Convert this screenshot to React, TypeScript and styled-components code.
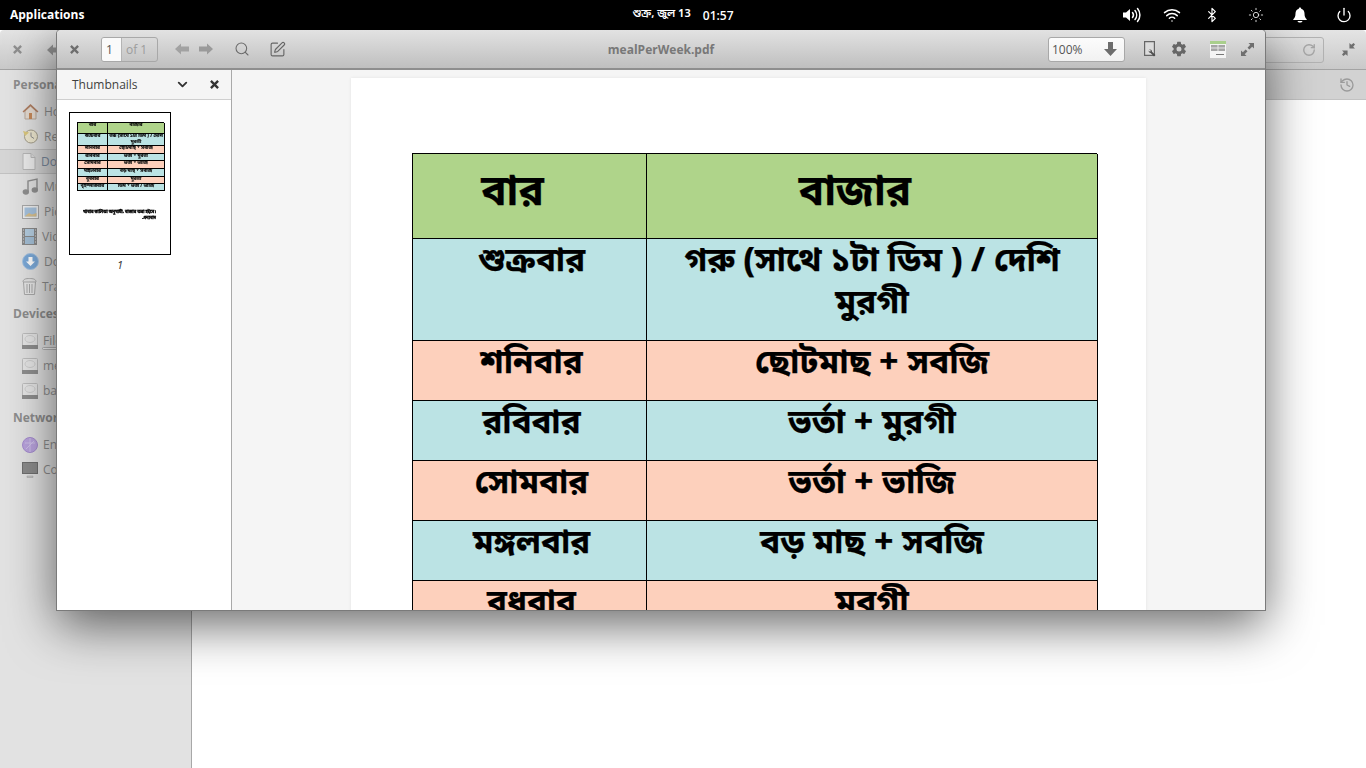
import * as React from "react";
import styled, { createGlobalStyle } from "styled-components";
import { Search, SquarePen, ChevronDown, RotateCw, History, Bluetooth, Sun, Power, Wifi } from "lucide-react";
import { IoSettingsSharp } from "react-icons/io5";

const GlobalStyle = createGlobalStyle`
  html, body {
    margin: 0;
    padding: 0;
    width: 1366px;
    height: 768px;
    overflow: hidden;
    background: #fff;
    font-family: "Open Sans", "Noto Sans", sans-serif;
  }
`;

const BANGLA = `"Noto Sans Bengali", "Lohit Bengali", "Noto Sans", "DejaVu Sans", sans-serif`;

const SScreen = styled.div`
  width: 1366px;
  height: 768px;
  display: flex;
  flex-direction: column;
  overflow: hidden;
`;

const SPanel = styled.div`
  position: relative;
  z-index: 1;
  height: 30px;
  flex: none;
  background: #000;
  color: #fff;
  display: grid;
  grid-template-columns: 1fr auto 1fr;
  align-items: center;
  padding: 0 10px;
  font-size: 12px;
  font-weight: 700;
`;

const SAppsLabel = styled.div`
  padding-bottom: 2px;
`;

const SClock = styled.div`
  display: flex;
  gap: 12px;
  font-weight: 600;
`;

const SDate = styled.span`
  font-family: ${BANGLA};
  font-size: 11px;
`;

const STray = styled.div`
  justify-self: end;
  display: flex;
  align-items: center;
  gap: 20px;
`;

const STrayIcon = styled.div<{ $tight?: boolean }>`
  width: 24px;
  height: 20px;
  display: flex;
  align-items: center;
  justify-content: center;
  margin-right: ${(p) => (p.$tight ? -4 : 0)}px;
`;

const SDesktop = styled.div`
  position: relative;
  flex: 1;
  min-height: 0;
`;

const SBackWindow = styled.div`
  height: 100%;
  display: flex;
  flex-direction: column;
  background: #fff;
`;

const SBackBar = styled.div`
  height: 39px;
  flex: none;
  background: linear-gradient(#e4e4e4, #c9c9c9);
  border-bottom: 1px solid #a3a3a3;
  border-radius: 4px 4px 0 0;
  display: flex;
  align-items: center;
  justify-content: space-between;
  padding: 0 11px 0 13px;
  color: #8f8f8f;
`;

const SBackLeft = styled.div`
  display: flex;
  align-items: center;
  gap: 25px;
`;

const SBackRight = styled.div`
  display: flex;
  align-items: center;
  gap: 18px;
`;

const SBackSearch = styled.div`
  width: 150px;
  height: 24px;
  border: 1px solid #b2b2b2;
  border-radius: 3px;
  display: flex;
  align-items: center;
  justify-content: flex-end;
  padding-right: 7px;
  color: #a5a5a5;
`;

const SBackBody = styled.div`
  flex: 1;
  display: flex;
  min-height: 0;
`;

const SSidebar = styled.div`
  width: 191px;
  flex: none;
  background: #e2e2e2;
  border-right: 1px solid #a8a8a8;
`;

const SSideHead = styled.div`
  height: 29px;
  line-height: 29px;
  padding-left: 13px;
  font-size: 12px;
  font-weight: 700;
  color: #8d8d8d;
`;

const SSideItem = styled.div<{ $active?: boolean }>`
  height: 25px;
  box-sizing: border-box;
  display: flex;
  align-items: center;
  gap: 5px;
  padding-left: 22px;
  font-size: 12px;
  color: ${(p) => (p.$active ? "#7b8a9e" : "#8f8f8f")};
  background: ${(p) => (p.$active ? "#d6d6d6" : "transparent")};
  border-top: ${(p) => (p.$active ? "1px solid #c2c2c2" : "none")};
  border-bottom: ${(p) => (p.$active ? "1px solid #c2c2c2" : "none")};
`;

const SSideLabel = styled.span<{ $usage?: boolean }>`
  position: relative;
  ${(p) =>
    p.$usage
      ? `&::after {
    content: "";
    position: absolute;
    left: -1px;
    top: 15px;
    width: 90px;
    height: 1px;
    background: #f2f2f2;
    border: 1px solid #b5b5b5;
    border-radius: 2px;
  }`
      : ""}
`;

const SBackMain = styled.div`
  flex: 1;
  display: flex;
  flex-direction: column;
`;

const SPathBar = styled.div`
  height: 30px;
  background: #d2d2d2;
  border-bottom: 1px solid #c2c2c2;
  box-sizing: border-box;
  display: flex;
  align-items: center;
  justify-content: flex-end;
  padding-right: 11px;
  color: #9a9a9a;
`;

const SPdfWindow = styled.div`
  position: absolute;
  left: 57px;
  top: 0;
  width: 1208px;
  height: 580px;
  display: flex;
  flex-direction: column;
  border-radius: 4px 4px 0 0;
  overflow: hidden;
`;

const SShadow = styled.div`
  position: absolute;
  left: 57px;
  top: 0;
  width: 1208px;
  height: 580px;
  border-radius: 4px 4px 0 0;
  box-shadow: 0 0 0 1px #7a7a7a, 0 15px 50px rgba(0, 0, 0, 0.6);
`;

const SToolbar = styled.div`
  height: 38px;
  flex: none;
  background: linear-gradient(#e2e2e2, #bfbfbf);
  border-bottom: 2px solid #8e8e8e;
  display: flex;
  align-items: center;
  position: relative;
  padding: 0 11px 0 13px;
  color: #6b6b6b;
`;

const STitle = styled.div`
  position: absolute;
  left: 0;
  right: 0;
  text-align: center;
  font-size: 12px;
  font-weight: 700;
  color: #787878;
  pointer-events: none;
`;

const SPager = styled.div`
  margin-left: 22px;
  width: 55px;
  height: 23px;
  border: 1px solid #a8a8a8;
  border-radius: 3px;
  display: flex;
  font-size: 12px;
  overflow: hidden;
`;

const SPageNum = styled.div`
  width: 20px;
  background: #fafafa;
  border-right: 1px solid #b4b4b4;
  color: #555;
  line-height: 23px;
  padding-left: 4px;
  box-sizing: border-box;
`;

const SPageOf = styled.div`
  flex: 1;
  color: #9c9c9c;
  line-height: 23px;
  padding-left: 4px;
`;

const SToolGroup = styled.div<{ $ml?: number; $gap?: number }>`
  display: flex;
  align-items: center;
  margin-left: ${(p) => p.$ml ?? 0}px;
  gap: ${(p) => p.$gap ?? 0}px;
`;

const SSpacer = styled.div`
  flex: 1;
`;

const SZoom = styled.div`
  width: 77px;
  height: 25px;
  box-sizing: border-box;
  background: linear-gradient(#fcfcfc, #f1f1f1);
  border: 1px solid #a8a8a8;
  border-radius: 3px;
  display: flex;
  align-items: center;
  justify-content: space-between;
  padding: 0 7px 0 3px;
  font-size: 12px;
  color: #555;
`;

const SPdfBody = styled.div`
  flex: 1;
  display: flex;
  min-height: 0;
`;

const SThumbPane = styled.div`
  width: 174px;
  flex: none;
  background: #fff;
  border-right: 1px solid #a9a9a9;
  display: flex;
  flex-direction: column;
`;

const SThumbHead = styled.div`
  height: 29px;
  flex: none;
  background: #f5f5f5;
  border-bottom: 1px solid #cfcfcf;
  display: flex;
  align-items: center;
  padding: 0 12px 0 15px;
  font-size: 12px;
  color: #3f3f3f;
`;

const SThumbTitle = styled.div`
  flex: 1;
`;

const SThumbHeadIcons = styled.div`
  display: flex;
  align-items: center;
  gap: 20px;
`;

const SThumbPage = styled.div`
  width: 102px;
  height: 143px;
  margin: 12px 0 0 12px;
  border: 1px solid #000;
  background: #fff;
  padding: 9px 6px 0 7px;
  box-sizing: border-box;
  filter: blur(0.35px);
`;

const SThumbLabel = styled.div`
  width: 102px;
  margin: 2px 0 0 12px;
  text-align: center;
  font-size: 11px;
  font-style: italic;
  color: #333;
`;

const SMiniTable = styled.div`
  display: grid;
  grid-template-columns: 30px 57px;
  border: 1px solid #000;
  border-width: 1px 0 0 1px;
  width: 87px;
  box-sizing: border-box;
  font-family: ${BANGLA};
  font-weight: 700;
  font-size: 4.8px;
  color: #111;
  -webkit-text-stroke: 0.15px #111;
`;

const SMiniCell = styled.div<{ $bg: string; $h: number }>`
  height: ${(p) => p.$h}px;
  background: ${(p) => p.$bg};
  border: 1px solid #000;
  border-width: 0 1px 1px 0;
  box-sizing: border-box;
  text-align: center;
  line-height: 5.5px;
  overflow: hidden;
`;

const SMiniNote = styled.div`
  margin-top: 18px;
  font-family: ${BANGLA};
  font-size: 4.2px;
  line-height: 6px;
  font-weight: 700;
  color: #000;
  text-align: right;
  padding-right: 8px;
  -webkit-text-stroke: 0.3px #000;
`;

const SViewer = styled.div`
  flex: 1;
  background: #f5f5f5;
  overflow: hidden;
  padding: 8px 0 0 119px;
`;

const SPage = styled.div`
  width: 795px;
  height: 900px;
  background: #fff;
  box-shadow: 0 0 3px rgba(0, 0, 0, 0.08);
  padding: 75px 0 0 61px;
  box-sizing: border-box;
`;

const STable = styled.div`
  width: 685px;
  display: grid;
  grid-template-columns: 234px 451px;
  border: 1px solid #000;
  border-width: 1px 0 0 1px;
  box-sizing: border-box;
  font-family: ${BANGLA};
  font-weight: 700;
  color: #000;
  -webkit-text-stroke: 0.25px #000;
`;

const SCell = styled.div<{ $bg: string; $h: number }>`
  height: ${(p) => p.$h}px;
  background: ${(p) => p.$bg};
  border: 1px solid #000;
  border-width: 0 1px 1px 0;
  box-sizing: border-box;
  text-align: center;
`;

const SHeadCell = styled(SCell)`
  font-size: 42px;
  line-height: 76px;
  padding: 2px 42px 0 8px;
`;

const SDayCell = styled(SCell)`
  font-size: 33px;
  line-height: 42px;
  padding: 3px 6px 0 10px;
`;

const SFoodCell = styled(SCell)`
  font-size: 33.6px;
  line-height: 42px;
  padding: 3px 8px 0;
`;

const GREEN = "#afd48a";
const BLUE = "#bbe3e4";
const PEACH = "#fdd0bc";

const rows: { day: string; food: string; bg: string; h: number }[] = [
  { day: "শুক্রবার", food: "গরু (সাথে ১টা ডিম ) / দেশি মুরগী", bg: BLUE, h: 102 },
  { day: "শনিবার", food: "ছোটমাছ + সবজি", bg: PEACH, h: 60 },
  { day: "রবিবার", food: "ভর্তা + মুরগী", bg: BLUE, h: 60 },
  { day: "সোমবার", food: "ভর্তা + ভাজি", bg: PEACH, h: 60 },
  { day: "মঙ্গলবার", food: "বড় মাছ + সবজি", bg: BLUE, h: 60 },
  { day: "বুধবার", food: "মুরগী", bg: PEACH, h: 60 },
];

const miniRows: { day: string; food: string; bg: string; h: number }[] = [
  { day: "বার", food: "বাজার", bg: GREEN, h: 11 },
  { day: "শুক্রবার", food: "গরু (সাথে ১টা ডিম ) / দেশি মুরগী", bg: BLUE, h: 12 },
  { day: "শনিবার", food: "ছোটমাছ + সবজি", bg: PEACH, h: 8 },
  { day: "রবিবার", food: "ভর্তা + মুরগী", bg: BLUE, h: 7 },
  { day: "সোমবার", food: "ভর্তা + ভাজি", bg: PEACH, h: 8 },
  { day: "মঙ্গলবার", food: "বড় মাছ + সবজি", bg: BLUE, h: 8 },
  { day: "বুধবার", food: "মুরগী", bg: PEACH, h: 7 },
  { day: "বৃহস্পতিবার", food: "ডিম + ভর্তা / ভাজি", bg: BLUE, h: 7 },
];

const SpeakerIcon = () => (
  <svg width="20" height="16" viewBox="0 0 20 16" fill="none" stroke="#fff" strokeWidth="1.5" strokeLinecap="round">
    <path d="M1 5.500h3L8 2v12l-4-3.500H1z" fill="#fff" stroke="none" />
    <path d="M10.500 5.500a4 4 0 0 1 0 5" />
    <path d="M13 3.500a7 7 0 0 1 0 9" />
    <path d="M15.500 1.500a10 10 0 0 1 0 13" />
  </svg>
);

const BellIcon = () => (
  <svg width="14" height="16" viewBox="0 0 14 16" fill="#fff">
    <path d="M7 .5c.7 0 1.200.5 1.200 1.200C10.500 2.300 11.500 4.300 11.500 6.500c0 3 .8 4.300 2.200 5.700v.8H.3v-.8C1.700 10.800 2.500 9.500 2.500 6.500c0-2.200 1-4.200 3.300-4.800C5.800 1 6.300.5 7 .5z" />
    <path d="M4.500 14h5c-.3 1-1.300 1.500-2.500 1.500S4.800 15 4.500 14z" />
  </svg>
);

const CloseIcon = ({ color = "#6e6e6e" }: { color?: string }) => (
  <svg width="9" height="9" viewBox="0 0 10 10">
    <path d="M1 1l8 8M9 1l-8 8" stroke={color} strokeWidth="2.600" />
  </svg>
);

const BlockArrow = ({ dir, color = "#a2a2a2" }: { dir: "left" | "right"; color?: string }) => (
  <svg width="14" height="12" viewBox="0 0 14 12" fill={color}>
    {dir === "left" ? <path d="M0 6l6-5.500V3.500h8v5H6v3z" /> : <path d="M14 6L8 .5V3.500H0v5h8v3z" />}
  </svg>
);

const DownArrow = () => (
  <svg width="13" height="14" viewBox="0 0 13 14" fill="#6d6d6d">
    <path d="M4 0h5v7h4l-6.500 7L0 7h4z" />
  </svg>
);

const DocToolsIcon = () => (
  <svg width="12" height="16" viewBox="0 0 12 16" fill="none">
    <path d="M.6.6h9.800v13.800H.6z" fill="#dcdcdc" stroke="#666" strokeWidth="1.200" />
    <path d="M5 8.500a2.300 2.300 0 0 1 3 2.200l3.500 3.300-1.500 1.500L6.600 12A2.300 2.300 0 0 1 4.500 9.600l1.500 1.200 1-1z" fill="#4f4f4f" />
  </svg>
);

const PresentationIcon = () => (
  <svg width="16" height="17" viewBox="0 0 16 17">
    <rect width="16" height="17" fill="#f4f4f4" />
    <rect width="16" height="3" fill="#a9cf8c" />
    <rect x="1" y="4" width="14" height="6" fill="#a5a5a5" />
    <path d="M8 4v6M1 7h14" stroke="#e6e6e6" />
    <rect x="6" y="13" width="8" height="1" fill="#777" />
  </svg>
);

const ExpandIcon = ({ inward }: { inward?: boolean }) => (
  <svg width="13" height="13" viewBox="0 0 14 14" fill="#6f6f6f">
    {inward ? (
      <>
        <path d="M8 6V0l2 2 2.500-2L14 1.500 12 4l2 2z" />
        <path d="M6 8v6l-2-2-2.500 2L0 12.500 2 10 0 8z" />
      </>
    ) : (
      <>
        <path d="M14 0v6l-2-2-3 3-2-2 3-3-2-2z" />
        <path d="M0 14V8l2 2 3-3 2 2-3 3 2 2z" />
      </>
    )}
  </svg>
);

const HomeIcon = () => (
  <svg width="17" height="17" viewBox="0 0 17 17">
    <path d="M3 8v8h11V8L8.500 3z" fill="#e6dcd2" stroke="#b9a99a" />
    <path d="M.5 8.500L8.500 1l8 7.500-1.200 1L8.500 3.300 1.700 9.500z" fill="#b07f62" />
    <rect x="7" y="10" width="3" height="6" fill="#c78a5a" />
  </svg>
);

const RecentIcon = () => (
  <svg width="17" height="17" viewBox="0 0 17 17" fill="none">
    <circle cx="9" cy="8.500" r="6.500" fill="#eee8d0" stroke="#a59f8c" />
    <path d="M9 4.500v4l3 2" stroke="#8f8f8f" />
    <path d="M1 3l6 1.500L3 8z" fill="#dcc87c" />
  </svg>
);

const DocIcon = () => (
  <svg width="14" height="17" viewBox="0 0 14 17">
    <path d="M1 .5h8l4 4v12H1z" fill="#ececec" stroke="#b8b8b8" />
    <path d="M9 .5v4h4" fill="#dcdcdc" stroke="#b8b8b8" />
  </svg>
);

const MusicIcon = () => (
  <svg width="17" height="17" viewBox="0 0 17 17" fill="none" stroke="#909090" strokeWidth="1.400">
    <path d="M6 13.500V3l9-2v10.500" />
    <ellipse cx="3.800" cy="14" rx="2.500" ry="2" fill="#909090" />
    <ellipse cx="12.800" cy="12" rx="2.500" ry="2" fill="#909090" />
  </svg>
);

const PictureIcon = () => (
  <svg width="17" height="17" viewBox="0 0 17 17">
    <rect x=".5" y="2.500" width="16" height="13" fill="#efefef" stroke="#a9a9a9" />
    <rect x="2.500" y="4.500" width="12" height="9" fill="#a7c3de" />
    <path d="M2.500 13.500L7 10l3 1.500 4.500-1.500v3.500z" fill="#d8c08e" />
  </svg>
);

const FilmIcon = () => (
  <svg width="15" height="17" viewBox="0 0 15 17">
    <rect width="15" height="17" fill="#8a8a8a" />
    <rect x="3" y="1" width="9" height="7" fill="#b4cde0" />
    <rect x="3" y="9" width="9" height="7" fill="#a4bfd6" />
    <path d="M1 2h1M1 5h1M1 8h1M1 11h1M1 14h1M13 2h1M13 5h1M13 8h1M13 11h1M13 14h1" stroke="#ddd" />
  </svg>
);

const DownloadIcon = () => (
  <svg width="17" height="17" viewBox="0 0 17 17">
    <circle cx="8.500" cy="8.500" r="8" fill="#7ba9d8" stroke="#a7c4e2" />
    <path d="M6.500 4h4v4.500h2.500l-4.500 4.500L4 8.500h2.500z" fill="#fff" />
  </svg>
);

const TrashIcon = () => (
  <svg width="15" height="17" viewBox="0 0 15 17" fill="#e6e6e6" stroke="#a9a9a9">
    <path d="M1.500 4h12l-1 12.500h-10z" />
    <path d="M1 4c0-3 3-3.500 6.500-3.500S14 1 14 4" fill="none" />
    <path d="M5 6v9M7.500 6v9M10 6v9" />
  </svg>
);

const DriveIcon = () => (
  <svg width="16" height="16" viewBox="0 0 16 16">
    <rect x=".5" y=".5" width="15" height="15" rx="1" fill="#e6e6e6" stroke="#bdbdbd" />
    <ellipse cx="8" cy="6" rx="5" ry="3.500" fill="none" stroke="#cfcfcf" />
    <rect x="0" y="12" width="16" height="4" fill="#8f8f8f" />
  </svg>
);

const NetworkIcon = () => (
  <svg width="16" height="16" viewBox="0 0 16 16">
    <circle cx="8" cy="8" r="7.500" fill="#b9a3dd" stroke="#a58ccf" />
    <path d="M3 6h10M8 1v14M4 12l8-8" stroke="#d9cdee" strokeWidth=".7" />
  </svg>
);

const MonitorIcon = () => (
  <svg width="16" height="16" viewBox="0 0 16 16">
    <rect y="0" width="16" height="12" fill="#6f6f6f" />
    <rect x="1" y="1" width="14" height="10" fill="#8b8b8b" />
    <path d="M5 14h6v1.500H5z" fill="#c9c9c9" stroke="#a0a0a0" strokeWidth=".5" />
  </svg>
);

const App = () => {
  return (
    <SScreen>
      <GlobalStyle />
      <SPanel>
        <SAppsLabel>Applications</SAppsLabel>
        <SClock>
          <SDate>শুক্র, জুল 13</SDate>
          <span>01:57</span>
        </SClock>
        <STray>
          <STrayIcon $tight><SpeakerIcon /></STrayIcon>
          <STrayIcon $tight><Wifi size={18} color="#fff" strokeWidth={2} /></STrayIcon>
          <STrayIcon><Bluetooth size={16} color="#fff" strokeWidth={1.8} /></STrayIcon>
          <STrayIcon><Sun size={16} color="#fff" strokeWidth={1.2} /></STrayIcon>
          <STrayIcon><BellIcon /></STrayIcon>
          <STrayIcon><Power size={16} color="#fff" strokeWidth={2} /></STrayIcon>
        </STray>
      </SPanel>
      <SDesktop>
        <SBackWindow>
          <SBackBar>
            <SBackLeft>
              <CloseIcon color="#8f8f8f" />
              <BlockArrow dir="left" color="#8f8f8f" />
            </SBackLeft>
            <SBackRight>
              <SBackSearch><RotateCw size={14} strokeWidth={2.4} /></SBackSearch>
              <ExpandIcon inward />
            </SBackRight>
          </SBackBar>
          <SBackBody>
            <SSidebar>
              <SSideHead>Personal</SSideHead>
              <SSideItem><HomeIcon />Home</SSideItem>
              <SSideItem><RecentIcon />Recent</SSideItem>
              <SSideItem $active><DocIcon />Documents</SSideItem>
              <SSideItem><MusicIcon />Music</SSideItem>
              <SSideItem><PictureIcon />Pictures</SSideItem>
              <SSideItem><FilmIcon />Videos</SSideItem>
              <SSideItem><DownloadIcon />Downloads</SSideItem>
              <SSideItem><TrashIcon />Trash</SSideItem>
              <SSideHead>Devices</SSideHead>
              <SSideItem><DriveIcon /><SSideLabel $usage>File System</SSideLabel></SSideItem>
              <SSideItem><DriveIcon />media</SSideItem>
              <SSideItem><DriveIcon />backup</SSideItem>
              <SSideHead>Network</SSideHead>
              <SSideItem><NetworkIcon />Entire Network</SSideItem>
              <SSideItem><MonitorIcon />Connect to Server</SSideItem>
            </SSidebar>
            <SBackMain>
              <SPathBar><History size={16} strokeWidth={2} /></SPathBar>
            </SBackMain>
          </SBackBody>
        </SBackWindow>
        <SShadow />
        <SPdfWindow>
          <SToolbar>
            <STitle>mealPerWeek.pdf</STitle>
            <CloseIcon />
            <SPager>
              <SPageNum>1</SPageNum>
              <SPageOf>of 1</SPageOf>
            </SPager>
            <SToolGroup $ml={17} $gap={10}>
              <BlockArrow dir="left" />
              <BlockArrow dir="right" color="#9a9a9a" />
            </SToolGroup>
            <SToolGroup $ml={21}><Search size={16} color="#6b6b6b" strokeWidth={1.6} /></SToolGroup>
            <SToolGroup $ml={19}><SquarePen size={17} color="#666" strokeWidth={1.6} /></SToolGroup>
            <SSpacer />
            <SZoom>100%<DownArrow /></SZoom>
            <SToolGroup $ml={19}><DocToolsIcon /></SToolGroup>
            <SToolGroup $ml={15}><IoSettingsSharp size={16} color="#666" /></SToolGroup>
            <SToolGroup $ml={23}><PresentationIcon /></SToolGroup>
            <SToolGroup $ml={15}><ExpandIcon /></SToolGroup>
          </SToolbar>
          <SPdfBody>
            <SThumbPane>
              <SThumbHead>
                <SThumbTitle>Thumbnails</SThumbTitle>
                <SThumbHeadIcons>
                  <ChevronDown size={15} color="#333" strokeWidth={3} />
                  <CloseIcon color="#333" />
                </SThumbHeadIcons>
              </SThumbHead>
              <SThumbPage>
                <SMiniTable>
                  {miniRows.map((r) => (
                    <React.Fragment key={r.day}>
                      <SMiniCell $bg={r.bg} $h={r.h}>{r.day}</SMiniCell>
                      <SMiniCell $bg={r.bg} $h={r.h}>{r.food}</SMiniCell>
                    </React.Fragment>
                  ))}
                </SMiniTable>
                <SMiniNote>
                  খাবার তালিকা অনুযায়ী, বাজার করা হইবে।
                  <br />
                  -ধন্যবাদ
                </SMiniNote>
              </SThumbPage>
              <SThumbLabel>1</SThumbLabel>
            </SThumbPane>
            <SViewer>
              <SPage>
                <STable>
                  <SHeadCell $bg={GREEN} $h={85}>বার</SHeadCell>
                  <SHeadCell $bg={GREEN} $h={85}>বাজার</SHeadCell>
                  {rows.map((r) => (
                    <React.Fragment key={r.day}>
                      <SDayCell $bg={r.bg} $h={r.h}>{r.day}</SDayCell>
                      <SFoodCell $bg={r.bg} $h={r.h}>{r.food}</SFoodCell>
                    </React.Fragment>
                  ))}
                </STable>
              </SPage>
            </SViewer>
          </SPdfBody>
        </SPdfWindow>
      </SDesktop>
    </SScreen>
  );
};

export default App;
